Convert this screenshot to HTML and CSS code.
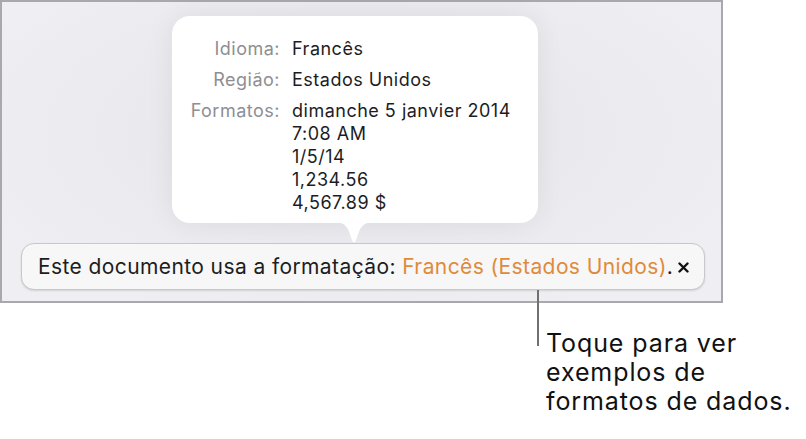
FILE: index.html
```html
<!DOCTYPE html>
<html lang="pt">
<head>
<meta charset="utf-8">
<link rel="stylesheet" href="styles.css">
</head>
<body>
<div class="page">
  <div class="frame">
    <div class="popover">
      <div class="row">
        <div class="label">Idioma:</div>
        <div class="value">Francês</div>
      </div>
      <div class="row">
        <div class="label">Região:</div>
        <div class="value">Estados Unidos</div>
      </div>
      <div class="row">
        <div class="label">Formatos:</div>
        <div class="value lines">
          <span>dimanche 5 janvier 2014</span>
          <span>7:08 AM</span>
          <span>1/5/14</span>
          <span>1,234.56</span>
          <span>4,567.89 $</span>
        </div>
      </div>
      <svg class="arrow" width="40" height="21" viewBox="0 0 40 21">
        <path d="M0 0 C8 0 10 2 14 7 L18.5 19.5 Q20 21 21.5 19.5 L26 7 C30 2 32 0 40 0 Z" fill="#ffffff"/>
      </svg>
    </div>
    <div class="bar">
      <span class="msg">Este documento usa a formatação: <span class="accent">Francês (Estados Unidos)</span>.</span>
      <svg class="close" width="11" height="11" viewBox="0 0 11 11">
        <path d="M1.5 1.5 L9.5 9.5 M9.5 1.5 L1.5 9.5" stroke="#111" stroke-width="2.4" stroke-linecap="round"/>
      </svg>
    </div>
  </div>
  <div class="leader"></div>
  <p class="callout">Toque para ver<br>exemplos de<br>formatos de dados.</p>
</div>
</body>
</html>
```
FILE: styles.css
```css
html, body {
  margin: 0;
  padding: 0;
  background: #ffffff;
}
body {
  font-family: Inter, "Liberation Sans", Arial, sans-serif;
  width: 806px;
  height: 439px;
  overflow: hidden;
}
.page {
  position: relative;
  width: 806px;
  height: 439px;
}
.frame {
  box-sizing: border-box;
  width: 723px;
  height: 303px;
  border: 2px solid #a9a9ad;
  background: radial-gradient(ellipse 420px 200px at 355px 130px, #e6e6ea 0%, #ebebef 60%, #efeff3 100%);
  display: flex;
  flex-direction: column;
  align-items: flex-start;
}
.popover {
  position: relative;
  box-sizing: border-box;
  margin-top: 14px;
  margin-left: 170px;
  width: 366px;
  height: 207px;
  background: #ffffff;
  border-radius: 18px;
  box-shadow: 0 0 28px rgba(0, 0, 0, 0.07);
  padding-top: 21px;
  display: flex;
  flex-direction: column;
  gap: 8px;
}
.row {
  display: flex;
  gap: 12px;
  font-size: 18px;
  line-height: 23px;
  letter-spacing: 0.5px;
}
.label {
  width: 108px;
  text-align: right;
  color: #8e8e93;
  flex-shrink: 0;
}
.value {
  color: #1d1d1f;
}
.lines {
  display: flex;
  flex-direction: column;
}
.arrow {
  position: absolute;
  left: 162px;
  top: 206px;
}
.bar {
  box-sizing: border-box;
  margin-top: 20px;
  margin-left: 19px;
  width: 684px;
  height: 47px;
  background: #f7f7f7;
  border: 1px solid #c8c8cc;
  border-radius: 13px;
  box-shadow: 0 1px 2px rgba(0, 0, 0, 0.12);
  display: flex;
  align-items: center;
  padding-left: 16px;
  gap: 5px;
}
.msg {
  font-size: 21px;
  letter-spacing: 0.4px;
  color: #1d1d1f;
  white-space: nowrap;
}
.accent {
  color: #e08a3c;
}
.close {
  margin-top: 2px;
}
.leader {
  position: absolute;
  left: 537px;
  top: 290px;
  width: 2px;
  height: 56px;
  background: #707070;
}
.callout {
  position: absolute;
  left: 546px;
  top: 329px;
  margin: 0;
  font-size: 25px;
  line-height: 29px;
  letter-spacing: 0.9px;
  color: #111111;
}
```
